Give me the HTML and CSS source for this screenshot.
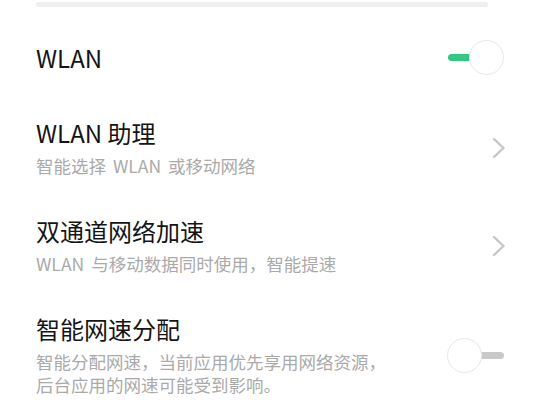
FILE: index.html
```html
<!DOCTYPE html>
<html lang="zh-CN">
<head>
    <meta charset="UTF-8">
    <title>WLAN</title>
    <link rel="stylesheet" href="styles.css">
</head>
<body>
    <div class="settings">
        <div class="top-bar"></div>

        <div class="item item-main">
            <div class="item-text">
                <div class="item-title">WLAN</div>
            </div>
            <div class="switch switch-on"><span class="knob"></span></div>
        </div>

        <div class="item">
            <div class="item-text">
                <div class="item-title">WLAN 助理</div>
                <div class="item-sub">智能选择 WLAN 或移动网络</div>
            </div>
            <svg class="chevron" width="14" height="22" viewBox="0 0 14 22">
                <path d="M2 2 L11.5 11 L2 20" fill="none" stroke="#c6c6c6" stroke-width="2.4" stroke-linecap="round" stroke-linejoin="round"/>
            </svg>
        </div>

        <div class="item">
            <div class="item-text">
                <div class="item-title">双通道网络加速</div>
                <div class="item-sub">WLAN 与移动数据同时使用，智能提速</div>
            </div>
            <svg class="chevron" width="14" height="22" viewBox="0 0 14 22">
                <path d="M2 2 L11.5 11 L2 20" fill="none" stroke="#c6c6c6" stroke-width="2.4" stroke-linecap="round" stroke-linejoin="round"/>
            </svg>
        </div>

        <div class="item">
            <div class="item-text">
                <div class="item-title">智能网速分配</div>
                <div class="item-sub">智能分配网速，当前应用优先享用网络资源，<br>后台应用的网速可能受到影响。</div>
            </div>
            <div class="switch switch-off"><span class="knob"></span></div>
        </div>
    </div>
</body>
</html>
```

FILE: styles.css
```css
body {
    margin: 0;
    background-color: #ffffff;
    font-family: "Noto Sans CJK SC", "Noto Sans", sans-serif;
    color: #141414;
}

.settings {
    padding: 0 36px 0 36px;
}

.top-bar {
    margin-top: 2px;
    height: 5px;
    margin-right: 17px;
    background-color: #efefef;
    border-radius: 3px;
}

.item {
    display: flex;
    justify-content: space-between;
    align-items: center;
    padding: 18px 0 21px 0;
}

.item-main {
    padding: 33px 0 25px 0;
}

.item-title {
    font-size: 24px;
    line-height: 30px;
}

.item-sub {
    margin-top: 6px;
    font-size: 17.5px;
    line-height: 23px;
    word-spacing: 3px;
    color: #aaaaaa;
}

.chevron {
    margin-right: -1px;
}

/* switch: thin track with a big round knob sitting on it */
.switch {
    position: relative;
    width: 57px;
    height: 35px;
    margin-right: 1px;
}

.switch::before {
    content: "";
    position: absolute;
    top: 14px;
    height: 7px;
    border-radius: 4px;
}

.switch-on::before {
    left: 1px;
    width: 40px;
    background-color: #33c784;
}

.switch-off::before {
    right: 0;
    width: 40px;
    background-color: #c9c9c9;
}

.knob {
    position: absolute;
    top: 0;
    width: 33px;
    height: 33px;
    border-radius: 50%;
    background-color: #ffffff;
    border: 1px solid #ebe7e7;
}

.switch-on .knob {
    right: 0;
}

.switch-off .knob {
    left: 0;
}
```
